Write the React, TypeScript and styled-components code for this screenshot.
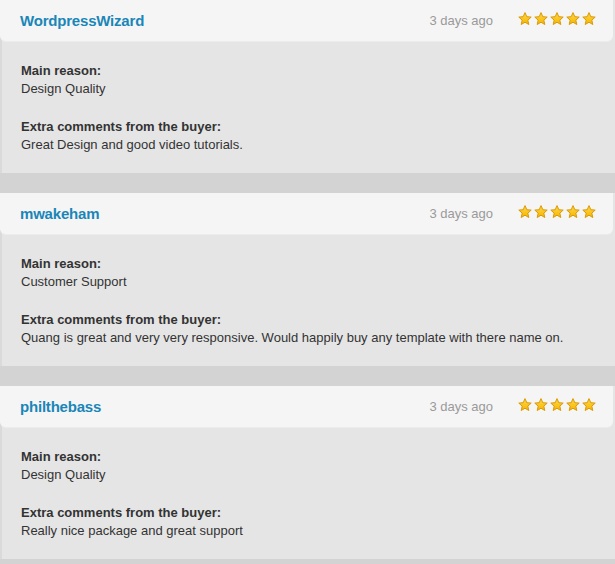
import React from "react";
import styled, { createGlobalStyle } from "styled-components";

const Global = createGlobalStyle`
  html, body { margin: 0; padding: 0; }
  body {
    background: #d3d3d3;
    font-family: "Liberation Sans", Arial, Helvetica, sans-serif;
    width: 615px;
    height: 564px;
    overflow: hidden;
  }
`;

const List = styled.div`
  display: flex;
  flex-direction: column;
  gap: 20px;
`;

const Card = styled.section`
  display: flex;
  flex-direction: column;
  background: #e5e5e5;
  border-left: 2px solid #dadada;
`;

const Header = styled.header`
  display: flex;
  align-items: center;
  height: 41px;
  margin-left: -2px;
  margin-right: 2px;
  padding: 0 16px 0 20px;
  background: #f5f5f5;
  border-radius: 0 0 6px 6px;
  box-shadow: 0 1px 0 #ececec;
`;

const Name = styled.a`
  flex: 1;
  font-size: 15px;
  font-weight: bold;
  color: #1a86b8;
  text-decoration: none;
  letter-spacing: -0.2px;
`;

const Ago = styled.span`
  font-size: 13px;
  color: #9a9a9a;
  margin-right: 24px;
`;

const Stars = styled.div`
  display: flex;
  margin-top: -3px;
`;

const Body = styled.div`
  display: flex;
  flex-direction: column;
  gap: 20px;
  padding: 21px 19px 19px 19px;
  font-size: 13px;
  line-height: 18px;
  color: #333;
`;

const Block = styled.div`
  display: flex;
  flex-direction: column;
`;

const Label = styled.strong`
  font-weight: bold;
  color: #333;
`;

const Text = styled.span`
  color: #333;
`;

const Star = () => (
  <svg width="16" height="16" viewBox="0 0 16 16">
    <defs>
      <linearGradient id="sg" x1="0" y1="0" x2="0" y2="1">
        <stop offset="0" stopColor="#ffd84a" />
        <stop offset="1" stopColor="#f7b500" />
      </linearGradient>
    </defs>
    <path
      d="M8 1.6 L9.8 5.7 L14.2 6.1 L10.8 9.1 L11.8 13.5 L8 11.2 L4.2 13.5 L5.2 9.1 L1.8 6.1 L6.2 5.7 Z"
      fill="url(#sg)"
      stroke="#d99a06"
      strokeWidth="1"
      strokeLinejoin="round"
    />
  </svg>
);

const reviews = [
  {
    name: "WordpressWizard",
    reason: "Design Quality",
    comment: "Great Design and good video tutorials.",
  },
  {
    name: "mwakeham",
    reason: "Customer Support",
    comment:
      "Quang is great and very very responsive. Would happily buy any template with there name on.",
  },
  {
    name: "philthebass",
    reason: "Design Quality",
    comment: "Really nice package and great support",
  },
];

export default function App() {
  return (
    <>
      <Global />
      <List>
        {reviews.map((r) => (
          <Card key={r.name}>
            <Header>
              <Name href="#">{r.name}</Name>
              <Ago>3 days ago</Ago>
              <Stars>
                {[0, 1, 2, 3, 4].map((i) => (
                  <Star key={i} />
                ))}
              </Stars>
            </Header>
            <Body>
              <Block>
                <Label>Main reason:</Label>
                <Text>{r.reason}</Text>
              </Block>
              <Block>
                <Label>Extra comments from the buyer:</Label>
                <Text>{r.comment}</Text>
              </Block>
            </Body>
          </Card>
        ))}
      </List>
    </>
  );
}
